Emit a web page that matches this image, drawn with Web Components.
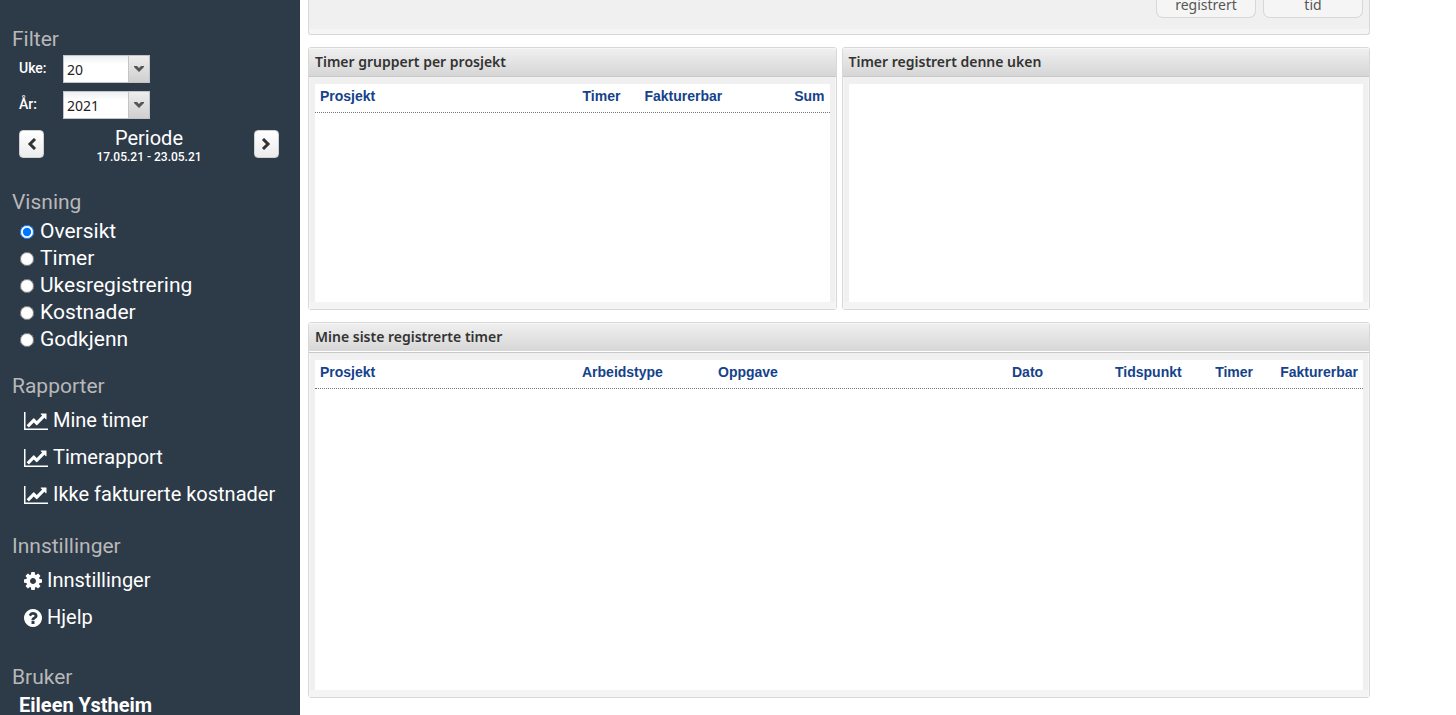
<!DOCTYPE html>
<html lang="no">
<head>
<meta charset="utf-8">
<meta name="viewport" content="width=device-width, initial-scale=1">
<title>Timeregistrering</title>
<style>
body{
    margin:0;
    background:#fff;
    font-family:Roboto,sans-serif;
    --formFont:"Noto Sans",Tahoma,sans-serif;
}
</style>
</head>
<body>
<ts-app>
    <ts-sidebar slot="side">
        <ts-section heading="Filter">
            <ts-filter></ts-filter>
        </ts-section>
        <ts-section heading="Visning">
            <ts-views options="Oversikt,Timer,Ukesregistrering,Kostnader,Godkjenn" value="Oversikt"></ts-views>
        </ts-section>
        <ts-section heading="Rapporter">
            <ts-link icon="chart">Mine timer</ts-link>
            <ts-link icon="chart">Timerapport</ts-link>
            <ts-link icon="chart">Ikke fakturerte kostnader</ts-link>
        </ts-section>
        <ts-section heading="Innstillinger" last>
            <ts-link icon="cog">Innstillinger</ts-link>
            <ts-link icon="help">Hjelp</ts-link>
        </ts-section>
        <ts-section heading="Bruker">
            <ts-user>Eileen Ystheim</ts-user>
        </ts-section>
    </ts-sidebar>
    <ts-summary>
        <ts-tile>registrert</ts-tile>
        <ts-tile>tid</ts-tile>
    </ts-summary>
    <ts-row>
        <ts-panel heading="Timer gruppert per prosjekt">
            <ts-table columns='[["Prosjekt"],["Timer",62],["Fakturerbar",105],["Sum",85,"right"]]'></ts-table>
        </ts-panel>
        <ts-panel heading="Timer registrert denne uken"></ts-panel>
    </ts-row>
    <ts-panel heading="Mine siste registrerte timer" large>
        <ts-table columns='[["Prosjekt"],["Arbeidstype",136],["Oppgave",294],["Dato",103],["Tidspunkt",75],["Timer",73,"right"],["Fakturerbar",105,"right"]]'></ts-table>
    </ts-panel>
</ts-app>

<script>
const icons = {
    chart: {
        width: 24,
        box: '0 128 2048 1536',
        path: 'M2048 1536v128H0V128h128v1408h1920zM1920 288v435q0 21-19.5 29.5t-35.5-7.5l-121-121-633 633q-10 10-23 10t-23-10l-233-233-416 416-192-192 585-585q10-10 23-10t23 10l233 233 464-464-121-121q-16-16-7.5-35.5t29.5-19.5h435q14 0 23 9t9 23z'
    },
    cog: {
        width: 18,
        box: '128 128 1536 1536',
        path: 'M1152 896q0-106-75-181t-181-75-181 75-75 181 75 181 181 75 181-75 75-181zm512-109v222q0 12-8 23t-20 13l-185 28q-19 54-39 91 35 50 107 138 10 12 10 25t-9 23q-27 37-99 108t-94 71q-12 0-26-9l-138-108q-44 23-91 38-16 136-29 186-7 28-36 28h-222q-14 0-24.5-8.5t-11.5-21.5l-28-184q-49-16-90-37l-141 107q-10 9-25 9-14 0-25-11-126-114-165-168-7-10-7-23 0-12 8-23 15-21 51-66.5t54-70.5q-27-50-41-99l-183-27q-13-2-21-12.5t-8-23.5v-222q0-12 8-23t19-13l186-28q14-46 39-92-40-57-107-138-10-12-10-24 0-10 9-23 26-36 98.5-107.5t94.5-71.5q13 0 26 10l138 107q44-23 91-38 16-136 29-186 7-28 36-28h222q14 0 24.5 8.5t11.5 21.5l28 184q49 16 90 37l142-107q9-9 24-9 13 0 25 10 129 119 165 170 7 8 7 22 0 12-8 23-15 21-51 66.5t-54 70.5q26 50 41 98l183 28q13 2 21 12.5t8 23.5z'
    },
    help: {
        width: 18,
        box: '128 128 1536 1536',
        path: 'M1024 1376v-192q0-14-9-23t-23-9h-192q-14 0-23 9t-9 23v192q0 14 9 23t23 9h192q14 0 23-9t9-23zm256-672q0-88-55.5-163t-138.5-116-170-41q-243 0-371 213-15 24 8 42l132 100q7 6 19 6 16 0 25-12 53-68 86-92 34-24 86-24 48 0 85.5 26t37.5 59q0 38-20 61t-68 45q-63 28-115.5 86.5t-52.5 125.5v36q0 14 9 23t23 9h192q14 0 23-9t9-23q0-19 21.5-49.5t54.5-49.5q32-18 49-28.5t46-35 44.5-48 28-60.5 12.5-81zm384 192q0 209-103 385.5t-279.5 279.5-385.5 103-385.5-103-279.5-279.5-103-385.5 103-385.5 279.5-279.5 385.5-103 385.5 103 279.5 279.5 103 385.5z'
    }
};

class TsElement extends HTMLElement {
    constructor() {
        super();
        this.attachShadow({ mode: 'open' });
    }

    connectedCallback() {
        this.shadowRoot.innerHTML = this.render();
    }
}

class TsApp extends TsElement {
    render() {
        return `
        <style>
        :host{
            display:flex;
            height:100vh;
            overflow:hidden;
        }
        main{
            display:flex;
            flex-direction:column;
            gap:12px;
            flex:1;
            min-width:0;
            max-width:1062px;
            padding:0 8px;
        }
        </style>
        <slot name="side"></slot>
        <main><slot></slot></main>
        `
    }
}
customElements.define('ts-app', TsApp);

class TsSidebar extends TsElement {
    render() {
        return `
        <style>
        :host{
            display:block;
            flex:0 0 300px;
            box-sizing:border-box;
            padding:26px 12px 0;
            color:#fff;
            background:#2d3a48;
            overflow:hidden;
        }
        </style>
        <slot></slot>
        `
    }
}
customElements.define('ts-sidebar', TsSidebar);

class TsSection extends TsElement {
    render() {
        return `
        <style>
        :host{
            display:block;
            padding-bottom:20px;
        }
        :host([last]){
            padding-bottom:28px;
        }
        h2{
            margin:0 0 3px;
            font-size:21px;
            line-height:26px;
            font-weight:400;
            color:#b8b8b8;
        }
        </style>
        <h2>${this.getAttribute('heading')}</h2>
        <slot></slot>
        `
    }
}
customElements.define('ts-section', TsSection);

class TsFilter extends TsElement {
    render() {
        return `
        <style>
        :host{
            display:flex;
            flex-direction:column;
            gap:8px;
            padding:0 9px 0 7px;
        }
        .field{
            display:flex;
            height:28px;
        }
        label{
            width:44px;
            font-size:14px;
            line-height:26px;
            font-weight:500;
        }
        .combo{
            display:grid;
            width:87px;
        }
        .combo > *{
            grid-area:1 / 1;
        }
        select{
            appearance:none;
            box-sizing:border-box;
            margin:0;
            padding:0 26px 0 3px;
            border:1px solid #c0c5cc;
            border-radius:0;
            font:14px var(--formFont);
            color:#222;
            background:linear-gradient(#eceff1,#fff 8px);
        }
        .trigger{
            justify-self:end;
            display:grid;
            place-items:start center;
            box-sizing:border-box;
            width:22px;
            padding-top:9px;
            border:1px solid #c4c4c4;
            border-radius:0 2px 2px 0;
            background:linear-gradient(#ededed,#cfcfcf);
            pointer-events:none;
        }
        .period{
            display:flex;
            justify-content:space-between;
            align-items:flex-start;
            height:39px;
            margin-top:3px;
            text-align:center;
        }
        button{
            display:grid;
            place-items:center;
            width:25px;
            height:28px;
            padding:0;
            border:1px solid #d0d0d0;
            border-radius:4px;
            background:linear-gradient(#fff,#ececec);
        }
        strong,small{
            display:block;
            font-weight:400;
        }
        strong{
            font-size:20px;
            line-height:16px;
        }
        small{
            font-size:12px;
            line-height:22px;
            font-weight:500;
        }
        </style>
        ${this.combo('uke', 'Uke:', '20')}
        ${this.combo('aar', 'År:', '2021')}
        <div class="period">
            <button type="button" aria-label="Forrige">
                <svg width="10" height="12" viewBox="0 0 10 12"><path d="M8 1 3 6l5 5" fill="none" stroke="#333" stroke-width="3"/></svg>
            </button>
            <div><strong>Periode</strong><small>17.05.21 - 23.05.21</small></div>
            <button type="button" aria-label="Neste">
                <svg width="10" height="12" viewBox="0 0 10 12"><path d="M2 1l5 5-5 5" fill="none" stroke="#333" stroke-width="3"/></svg>
            </button>
        </div>
        `
    }

    combo(id, label, value) {
        return `
        <div class="field">
            <label for="${id}">${label}</label>
            <div class="combo">
                <select id="${id}"><option>${value}</option></select>
                <span class="trigger"><svg width="12" height="8" viewBox="0 0 12 8"><path d="M1 1h3l2 2 2-2h3v1L6 7 1 2z" fill="#555"/></svg></span>
            </div>
        </div>
        `
    }
}
customElements.define('ts-filter', TsFilter);

class TsViews extends TsElement {
    render() {
        const value = this.getAttribute('value');
        return `
        <style>
        :host{
            display:block;
            padding-left:8px;
        }
        label{
            display:flex;
            align-items:center;
            gap:6px;
            font-size:21px;
            line-height:27px;
        }
        input{
            width:14px;
            height:14px;
            margin:0;
        }
        </style>
        ${this.getAttribute('options').split(',').map(name => `
        <label><input type="radio" name="view" ${name===value?'checked':''}>${name}</label>`).join('')}
        `
    }
}
customElements.define('ts-views', TsViews);

class TsLink extends TsElement {
    render() {
        const icon = icons[this.getAttribute('icon')];
        return `
        <style>
        :host{
            display:block;
            padding-left:12px;
        }
        a{
            display:flex;
            align-items:center;
            gap:5px;
            font-size:20px;
            line-height:37px;
            white-space:nowrap;
            color:#fff;
            text-decoration:none;
        }
        </style>
        <a href="#"><svg width="${icon.width}" height="18" viewBox="${icon.box}" fill="currentColor"><path d="${icon.path}"/></svg><slot></slot></a>
        `
    }
}
customElements.define('ts-link', TsLink);

class TsUser extends TsElement {
    render() {
        return `
        <style>
        :host{
            display:block;
            padding-left:7px;
            font-size:20px;
            line-height:24px;
            font-weight:700;
        }
        </style>
        <slot></slot>
        `
    }
}
customElements.define('ts-user', TsUser);

// lower edge of the summary strip, its upper part is scrolled out of view
class TsSummary extends TsElement {
    render() {
        return `
        <style>
        :host{
            display:flex;
            justify-content:flex-end;
            align-items:flex-start;
            gap:7px;
            box-sizing:border-box;
            padding:0 6px 16px;
            border:1px solid #d8d8d8;
            border-top:0;
            border-radius:0 0 3px 3px;
            background:#f0f0f0;
            box-shadow:inset 0 -5px #f5f5f5;
        }
        </style>
        <slot></slot>
        `
    }
}
customElements.define('ts-summary', TsSummary);

class TsTile extends TsElement {
    render() {
        return `
        <style>
        button{
            display:block;
            box-sizing:border-box;
            width:100px;
            padding:0 0 8px;
            border:1px solid #d8d8d8;
            border-top:0;
            border-radius:0 0 7px 7px;
            font:14px/9px var(--formFont);
            color:#555;
            background:#f5f5f5;
        }
        </style>
        <button type="button"><slot></slot></button>
        `
    }
}
customElements.define('ts-tile', TsTile);

class TsRow extends TsElement {
    render() {
        return `
        <style>
        :host{
            display:grid;
            grid-template-columns:1fr 1fr;
            gap:5px;
        }
        </style>
        <slot></slot>
        `
    }
}
customElements.define('ts-row', TsRow);

class TsPanel extends TsElement {
    render() {
        return `
        <style>
        :host{
            display:block;
            min-width:0;
            border:1px solid #d8d8d8;
            border-radius:3px;
            background:#f0f0f0;
        }
        h2{
            margin:0;
            padding:0 6px;
            border-bottom:1px solid #c8c8c8;
            border-radius:2px 2px 0 0;
            font:600 14px/28px var(--formFont);
            color:#333;
            background:linear-gradient(#f0f0f0,#d6d6d6);
            box-shadow:inset 0 1px #f6f6f6;
        }
        .body{
            padding:7px 6px;
            box-shadow:inset 1px 0 #f7f7f7,inset -1px 0 #f7f7f7,inset 0 -7px #f4f4f4;
        }
        .content{
            min-height:218px;
            background:#fff;
        }
        :host([large]) h2{
            padding-bottom:1px;
            box-shadow:inset 0 1px #f6f6f6,inset 0 -1px #fff;
        }
        :host([large]) .content{
            min-height:330px;
        }
        </style>
        <h2>${this.getAttribute('heading')}</h2>
        <div class="body"><div class="content"><slot></slot></div></div>
        `
    }
}
customElements.define('ts-panel', TsPanel);

class TsTable extends TsElement {
    render() {
        const columns = JSON.parse(this.getAttribute('columns'));
        return `
        <style>
        :host{
            display:block;
        }
        table{
            width:100%;
            table-layout:fixed;
            border-spacing:0;
            border-bottom:1px dotted #777;
            font-family:"Liberation Sans",Arial,sans-serif;
        }
        th{
            padding:4px 5px 8px;
            font-size:14px;
            line-height:16px;
            text-align:left;
            color:#15428b;
        }
        .right{
            text-align:right;
        }
        </style>
        <table>
            <thead>
                <tr>${columns.map(([name, width, align]) => `<th scope="col" class="${align||''}" ${width?`style="width:${width-10}px"`:''}>${name}</th>`).join('')}</tr>
            </thead>
        </table>
        `
    }
}
customElements.define('ts-table', TsTable);
</script>
</body>
</html>
